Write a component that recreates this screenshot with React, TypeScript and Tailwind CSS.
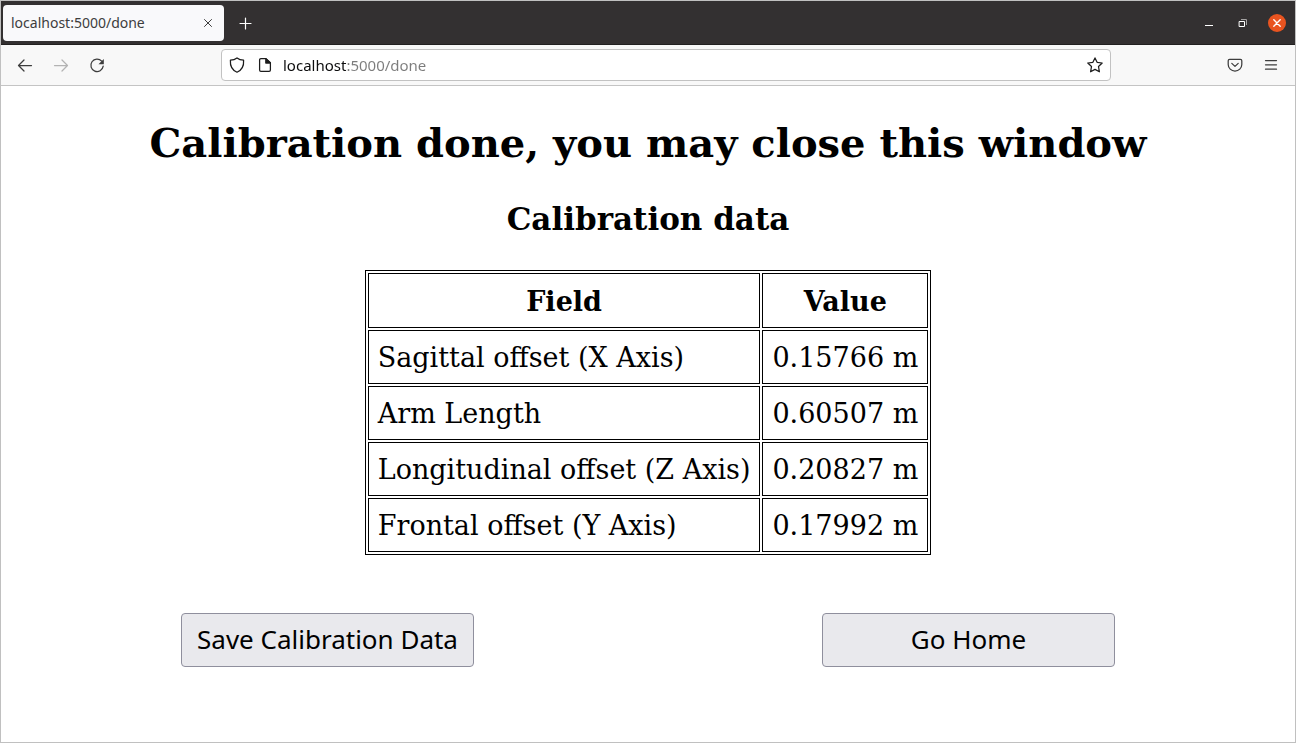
import type { ReactNode } from "react";

const measurements = [
  { field: "Sagittal offset (X Axis)", value: "0.15766 m" },
  { field: "Arm Length", value: "0.60507 m" },
  { field: "Longitudinal offset (Z Axis)", value: "0.20827 m" },
  { field: "Frontal offset (Y Axis)", value: "0.17992 m" },
];

const headCell = "border border-black px-[9px] pt-3 pb-[9px]";
const cell = "border border-black px-[9px] pt-[11px] pb-[9px]";
const actionButton =
  "min-w-[293px] rounded-[4px] border border-[#8f8f9d] bg-[#e9e9ed] px-3 pt-[7px] pb-[9px] font-['Noto_Sans',sans-serif] text-[26px] leading-9";

function Icon({ children, className = "" }: { children: ReactNode; className?: string }) {
  return (
    <svg
      viewBox="0 0 16 16"
      aria-hidden="true"
      className={`size-4 shrink-0 ${className}`}
      fill="none"
      stroke="currentColor"
      strokeWidth="1.25"
      strokeLinecap="round"
      strokeLinejoin="round"
    >
      {children}
    </svg>
  );
}

function ToolButton({
  label,
  disabled,
  children,
}: {
  label: string;
  disabled?: boolean;
  children: ReactNode;
}) {
  return (
    <button
      type="button"
      aria-label={label}
      disabled={disabled}
      className="flex size-8 items-center justify-center rounded text-[#3d3d3d] disabled:text-[#b3b3b3]"
    >
      {children}
    </button>
  );
}

function TabBar() {
  return (
    <div className="flex h-11 items-center border-b border-[#222020] bg-[#333031] pr-px pl-0.5">
      <div className="flex h-9 w-[221px] items-center justify-between rounded-[4px] bg-[#f9f9fb] pr-2 pl-2">
        <span className="text-sm text-[#3d3d3d]">localhost:5000/done</span>
        <button type="button" aria-label="Close tab" className="text-[#3d3d3d]">
          <Icon>
            <path d="M4.500 4.500l7 7M11.500 4.500l-7 7" strokeWidth="1" />
          </Icon>
        </button>
      </div>
      <button
        type="button"
        aria-label="New tab"
        className="ml-[5px] flex size-8 items-center justify-center text-white"
      >
        <Icon>
          <path d="M8.500 3v11M3 8.500h11" strokeWidth="1.2" />
        </Icon>
      </button>
      <div className="ml-auto flex items-center text-white">
        <button type="button" aria-label="Minimize" className="flex w-[34px] justify-center">
          <Icon>
            <path d="M4 10.500h8" strokeWidth="1" strokeLinecap="butt" />
          </Icon>
        </button>
        <button type="button" aria-label="Restore" className="flex w-[34px] justify-center">
          <Icon>
            <path d="M4.500 6.500h5v5h-5z" strokeWidth="1" strokeLinejoin="miter" />
            <path d="M6 4.500h5.500V10" strokeWidth="1" strokeLinecap="butt" strokeLinejoin="miter" stroke="#a5a3a3" />
          </Icon>
        </button>
        <button type="button" aria-label="Close window" className="flex w-[34px] justify-center">
          <span className="flex size-[18px] items-center justify-center rounded-full bg-[#e95420]">
            <Icon>
              <path d="M4.800 4.800l6.400 6.400M11.200 4.800l-6.400 6.400" strokeWidth="1.4" />
            </Icon>
          </span>
        </button>
      </div>
    </div>
  );
}

function NavigationBar() {
  return (
    <div className="grid grid-cols-[212px_1fr_176px] items-center gap-x-2 border-b border-[#c4c4c4] bg-[#f8f8f8] py-1">
      <div className="flex gap-1 pl-2">
        <ToolButton label="Back">
          <Icon>
            <path d="M14.500 8.500H1.500M7 3L1.500 8.500L7 14" />
          </Icon>
        </ToolButton>
        <ToolButton label="Forward" disabled>
          <Icon>
            <path d="M1.500 8.500h13M9 3L14.500 8.500L9 14" />
          </Icon>
        </ToolButton>
        <ToolButton label="Reload">
          <Icon>
            <path d="M12.700 4.200A6.200 6.200 0 1 0 14.200 9.200" />
            <path d="M14.800 2v4.900a.4.4 0 0 1-.4.4H9.500z" fill="currentColor" stroke="none" />
          </Icon>
        </ToolButton>
      </div>
      <div className="flex h-8 items-center rounded-[4px] border border-[#c2c2c2] bg-white px-[7px] text-[#1c1c1c]">
        <Icon>
          <path d="M8 .9C6.400 2.200 3.900 3.100 1.400 3.200C1 8.600 2.300 12.700 8 15.200C13.700 12.700 15 8.600 14.600 3.200C12.100 3.100 9.600 2.200 8 .9z" />
        </Icon>
        <Icon className="ml-3">
          <path d="M3.900 1.600h5.100l4.400 4.200v7.200a1.300 1.300 0 0 1-1.300 1.300H3.900a1.300 1.300 0 0 1-1.300-1.300V2.900a1.300 1.300 0 0 1 1.300-1.300z" />
          <path d="M8.800 1.600v4.400h4.600z" fill="currentColor" />
        </Icon>
        <input
          type="text"
          aria-label="Address"
          defaultValue="localhost:5000/done"
          className="ml-2.5 min-w-0 flex-1 bg-linear-to-r from-[#0c0c0d] from-[64px] to-[#7c7c7c] to-[64px] bg-clip-text text-[15px] leading-6 text-transparent caret-black outline-none"
        />
        <button type="button" aria-label="Bookmark this page">
          <Icon>
            <path d="M8 .9L10.100 5.300L15.200 6L11.500 9.500L12.400 14.800L8 12.400L3.600 14.800L4.500 9.500L.8 6L5.900 5.300z" />
          </Icon>
        </button>
      </div>
      <div className="flex justify-end gap-1 pr-2">
        <ToolButton label="Save to Pocket">
          <Icon>
            <path d="M2.600 2.300h10.800A1.400 1.400 0 0 1 14.800 3.700V7.500A6.800 6.500 0 0 1 1.200 7.500V3.700A1.400 1.400 0 0 1 2.600 2.300z" />
            <path d="M4.800 6.400L8 9.400L11.200 6.400" />
          </Icon>
        </ToolButton>
        <ToolButton label="Open application menu">
          <Icon>
            <path d="M2.500 3.500h11M2.500 7.800h11M2.500 12.200h11" />
          </Icon>
        </ToolButton>
      </div>
    </div>
  );
}

export default function App() {
  return (
    <div className="flex min-h-screen flex-col border border-[#c0c0c0] bg-white font-['Noto_Sans',sans-serif] text-black">
      <header>
        <TabBar />
        <NavigationBar />
      </header>
      <main className="flex flex-col items-center px-1.5 pt-[33px] font-['DejaVu_Serif',serif]">
        <h1 className="text-center text-[40px] leading-12 font-bold">
          Calibration done, you may close this window
        </h1>
        <h2 className="mt-8 text-center text-[31px] leading-10 font-bold">Calibration data</h2>
        <table className="mt-[31px] border-separate border-spacing-0.5 border border-black text-[27px] leading-8">
          <thead>
            <tr>
              <th scope="col" className={headCell}>Field</th>
              <th scope="col" className={headCell}>Value</th>
            </tr>
          </thead>
          <tbody>
            {measurements.map((row) => (
              <tr key={row.field}>
                <td className={cell}>{row.field}</td>
                <td className={cell}>{row.value}</td>
              </tr>
            ))}
          </tbody>
        </table>
        <div className="mt-[58px] flex w-full flex-wrap justify-around">
          <button type="button" className={actionButton}>Save Calibration Data</button>
          <button type="button" className={actionButton}>Go Home</button>
        </div>
      </main>
    </div>
  );
}
